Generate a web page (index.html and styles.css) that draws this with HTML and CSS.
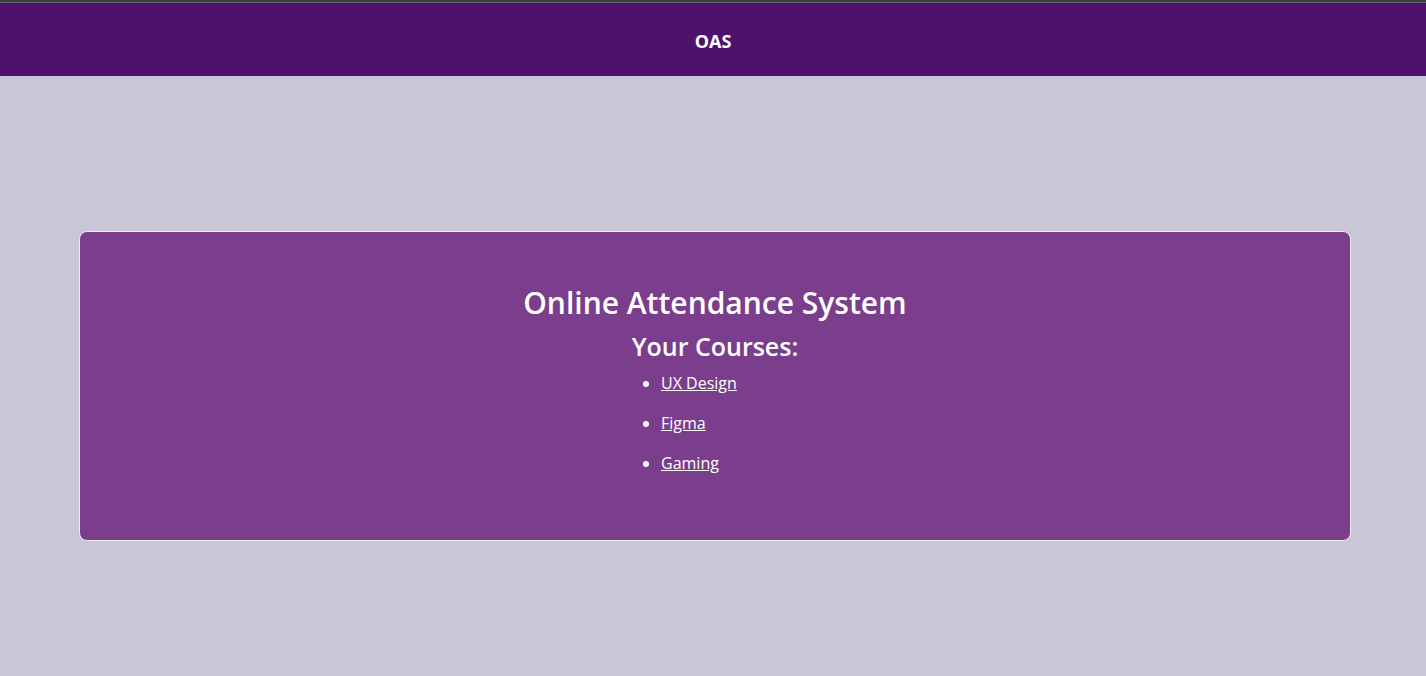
FILE: index.html
```html
<!DOCTYPE html>
<html lang="en">
<head>
<meta charset="utf-8">
<title>OAS</title>
<link rel="stylesheet" href="styles.css">
</head>
<body>
<div class="chrome"></div>
<header class="topbar">
  <span class="brand">OAS</span>
</header>
<main class="page">
  <section class="card">
    <h1 class="title">Online Attendance System</h1>
    <h2 class="subtitle">Your Courses:</h2>
    <ul class="courses">
      <li><a href="#">UX Design</a></li>
      <li><a href="#">Figma</a></li>
      <li><a href="#">Gaming</a></li>
    </ul>
  </section>
</main>
</body>
</html>
```

FILE: styles.css
```css
* { box-sizing: border-box; }
html, body {
  margin: 0;
  padding: 0;
  height: 100%;
}
body {
  background: #c9c6d8;
  font-family: "Open Sans", "Noto Sans", sans-serif;
  color: #ffffff;
  display: flex;
  flex-direction: column;
}
.chrome {
  height: 3px;
  background: #3b3d41;
  border-bottom: 1px solid #6a6b70;
}
.topbar {
  height: 73px;
  background: #4e126e;
  display: flex;
  align-items: center;
  justify-content: center;
  padding-top: 3px;
}
.brand {
  font-weight: 700;
  font-size: 18px;
}
.page {
  padding: 155px 75px 0 79px;
}
.card {
  background: #7a3e8c;
  border: 1px solid #f0eaf4;
  border-radius: 8px;
  height: 310px;
  padding-top: 49px;
  text-align: center;
}
.title {
  margin: 0;
  font-size: 30px;
  font-weight: 600;
  line-height: 44px;
}
.subtitle {
  margin: 0;
  font-size: 25px;
  font-weight: 600;
  line-height: 42px;
}
.courses {
  width: 186px;
  margin: 4px auto 0;
  padding-left: 39px;
  text-align: left;
  list-style: disc;
  font-size: 16px;
}
.courses li {
  line-height: 24px;
  margin-bottom: 16px;
}
.courses a {
  color: #ffffff;
}
```
